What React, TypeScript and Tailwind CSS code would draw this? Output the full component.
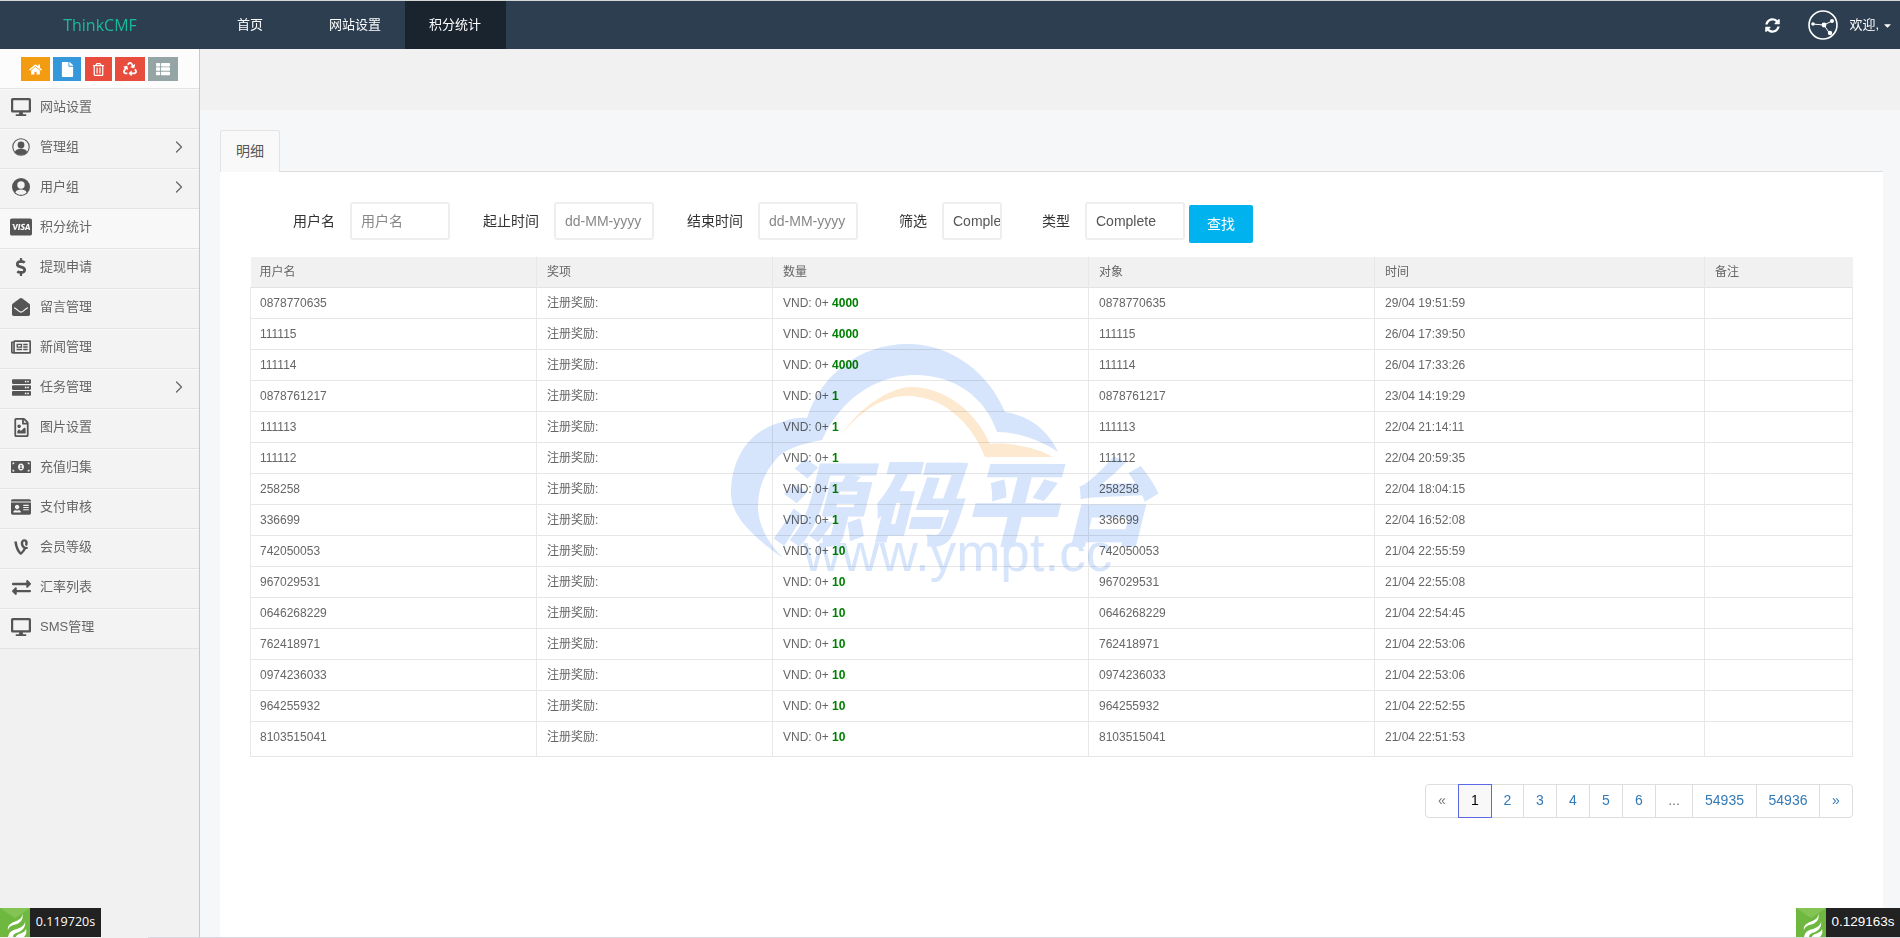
import React from "react";
import {
  FaHome, FaFile, FaRegTrashAlt, FaRecycle, FaThList, FaDesktop, FaCcVisa, FaDollarSign,
  FaEnvelopeOpen, FaRegNewspaper, FaServer, FaRegFileImage, FaMoneyBillAlt, FaIdCard, FaVine, FaExchangeAlt,
  FaSyncAlt, FaCaretDown,
} from "react-icons/fa";
import { ChevronRight } from "lucide-react";

function UserThin({ className }: { className?: string }) {
  return (
    <svg viewBox="0 0 18 18" className={className}>
      <circle cx="9" cy="9" r="8.2" fill="none" stroke="currentColor" strokeWidth="1.1" />
      <circle cx="9" cy="7" r="3.4" fill="currentColor" />
      <path d="M2.8 14.2C3.6 11.6 6 10.8 9 10.8s5.4.8 6.2 3.4C13.6 16 11.4 17 9 17s-4.6-1-6.2-2.8z" fill="currentColor" />
    </svg>
  );
}

function UserThick({ className }: { className?: string }) {
  return (
    <svg viewBox="0 0 18 18" className={className}>
      <circle cx="9" cy="9" r="9" fill="currentColor" />
      <circle cx="9" cy="7" r="3.7" fill="#f3f3f3" />
      <path d="M3.4 14.4C4 12.2 6.4 11.4 9 11.4s5 .8 5.6 3C13.2 16 11.2 16.8 9 16.8s-4.2-.8-5.6-2.4z" fill="#f3f3f3" />
    </svg>
  );
}

const side: [React.ComponentType<{ className?: string }>, string, boolean, string][] = [
  [FaDesktop, "网站设置", false, "text-[20px]"],
  [UserThin, "管理组", true, "w-[18px] h-[18px]"],
  [UserThick, "用户组", true, "w-[18px] h-[18px]"],
  [FaCcVisa, "积分统计", false, "text-[22px]"],
  [FaDollarSign, "提现申请", false, "text-[18px]"],
  [FaEnvelopeOpen, "留言管理", false, "text-[18px]"],
  [FaRegNewspaper, "新闻管理", false, "text-[20px]"],
  [FaServer, "任务管理", true, "text-[19px]"],
  [FaRegFileImage, "图片设置", false, "text-[19px]"],
  [FaMoneyBillAlt, "充值归集", false, "text-[20px]"],
  [FaIdCard, "支付审核", false, "text-[20px]"],
  [FaVine, "会员等级", false, "text-[18px]"],
  [FaExchangeAlt, "汇率列表", false, "text-[19px]"],
  [FaDesktop, "SMS管理", false, "text-[20px]"],
];

const rows: [string, string, string][] = [
  ["0878770635", "4000", "29/04 19:51:59"],
  ["111115", "4000", "26/04 17:39:50"],
  ["111114", "4000", "26/04 17:33:26"],
  ["0878761217", "1", "23/04 14:19:29"],
  ["111113", "1", "22/04 21:14:11"],
  ["111112", "1", "22/04 20:59:35"],
  ["258258", "1", "22/04 18:04:15"],
  ["336699", "1", "22/04 16:52:08"],
  ["742050053", "10", "21/04 22:55:59"],
  ["967029531", "10", "21/04 22:55:08"],
  ["0646268229", "10", "21/04 22:54:45"],
  ["762418971", "10", "21/04 22:53:06"],
  ["0974236033", "10", "21/04 22:53:06"],
  ["964255932", "10", "21/04 22:52:55"],
  ["8103515041", "10", "21/04 22:51:53"],
];

const pages: [string, string, string][] = [
  ["«", "w-[32px]", "text-[#777]"],
  ["1", "w-[34px]", "text-black"],
  ["2", "w-[31px]", "text-[#337ab7]"],
  ["3", "w-[33px]", "text-[#337ab7]"],
  ["4", "w-[33px]", "text-[#337ab7]"],
  ["5", "w-[33px]", "text-[#337ab7]"],
  ["6", "w-[33px]", "text-[#337ab7]"],
  ["...", "w-[37px]", "text-[#777]"],
  ["54935", "w-[64px]", "text-[#337ab7]"],
  ["54936", "w-[63px]", "text-[#337ab7]"],
  ["»", "w-[33px]", "text-[#337ab7]"],
];

const F = "font-['Liberation_Sans','Noto_Sans_CJK_SC',sans-serif]";
const inputCls =
  "h-[38px] border-2 border-[#eeeeee] rounded-[3px] bg-white pl-[9px] text-[14px] text-[#555] placeholder:text-[#888] outline-none";

function Flame() {
  return (
    <svg viewBox="0 0 30 29" className="w-[30px] h-[29px] block">
      <rect width="30" height="29" fill="#6fb83f" />
      <path d="M0 0h30L15 10z" fill="#83c455" />
      <path d="M22 5c1 5-3 7-8 9-5 2-7 5-6 8 1-4 5-5 9-6 4-2 7-5 5-11z" fill="#fff" />
      <path d="M25 13c0 4-3 6-8 8-5 1-8 3-9 8h5c0-3 3-4 6-5 4-2 7-5 6-11z" fill="#fff" />
      <path d="M26 21c-1 3-4 4-7 5-2 1-3 2-3 3h8c2-2 3-5 2-8z" fill="#fff" />
    </svg>
  );
}

function Watermark() {
  return (
    <div className="absolute left-[731px] top-[344px] w-[430px] h-[245px] pointer-events-none mix-blend-multiply">
      <svg viewBox="0 0 430 245" className="absolute left-0 top-0 w-[430px] h-[245px]">
        <path
          d="M52 214C18 190 0 170 0 150C0 110 22 85 51 78C60 74 70 73 76 74C90 30 130 0 176 0C222 0 258 30 274 68C300 72 318 88 327 108C306 94 284 88 266 88C254 52 222 31 184 31C150 31 112 50 91 96C70 100 55 105 47 113C33 128 27 145 27 163C27 180 36 198 52 214Z"
          fill="#d6e5fb"
        />
        <path
          d="M109 93C130 60 162 43 180 43C216 43 246 70 259 100C280 98 306 104 322 113L254 113C240 78 212 52 176 52C150 52 126 70 109 93Z"
          fill="#fde9cf"
        />
      </svg>
      <div className="absolute left-[40px] top-[98px] w-[400px] text-[93px] leading-[112px] font-black italic text-[#d6e5fb] tracking-[3px] whitespace-nowrap font-['Noto_Sans_CJK_SC',sans-serif]">
        源码平台
      </div>
      <div className="absolute left-[72px] top-[179px] text-[53px] leading-[60px] text-[#d6e5fb] whitespace-nowrap font-['Liberation_Sans',sans-serif]">
        www.ympt.cc
      </div>
    </div>
  );
}

export default function App() {
  return (
    <div className={`relative w-[1900px] h-[938px] overflow-hidden bg-[#f6f7f9] flex flex-col ${F}`}>
      <header className="h-[49px] shrink-0 flex bg-[#2c3e50] border-t border-[#d5d5d5] text-white">
        <div className="w-[200px] flex items-center justify-center text-[16px] text-[#18bc9c] font-['Open_Sans',sans-serif]">
          ThinkCMF
        </div>
        <nav className="flex text-[13px] ml-[13px]">
          <a className="px-[24px] flex items-center">首页</a>
          <a className="ml-[18px] px-[24px] flex items-center">网站设置</a>
          <a className="px-[24px] w-[101px] flex items-center bg-[#1a242f]">积分统计</a>
        </nav>
        <div className="ml-auto flex items-center pr-[7px]">
          <FaSyncAlt className="text-[15px] mr-[28px]" />
          <svg viewBox="0 0 30 30" className="w-[30px] h-[30px] mr-[11px]" fill="none" stroke="#fff">
            <circle cx="15" cy="15" r="14" strokeWidth="1.6" />
            <path d="M4 14l12 1 8-4M16 15l6 9" strokeWidth="1" />
            <circle cx="16" cy="15" r="2.4" fill="#fff" stroke="none" />
            <circle cx="5" cy="14" r="1.8" fill="#fff" stroke="none" />
            <circle cx="24" cy="11" r="2" fill="#fff" stroke="none" />
            <circle cx="22" cy="23" r="2.2" fill="#fff" stroke="none" />
          </svg>
          <span className="text-[13px]">欢迎,</span>
          <FaCaretDown className="text-[11px] ml-[3px]" />
        </div>
      </header>

      <div className="flex flex-1 min-h-0">
        <aside className="w-[200px] shrink-0 bg-[#f1f1f1] border-r border-[#c8c8c8] flex flex-col">
          <div className="h-[40px] bg-[#fcfcfc] border-b border-[#e3e3e3] flex items-start pt-[8px] pl-[21px] text-white">
            <span className="w-[29px] h-[24px] mr-[3px] bg-[#f39c12] flex items-center justify-center"><FaHome className="text-[13px]" /></span>
            <span className="w-[28px] h-[24px] mr-[4px] bg-[#3498db] flex items-center justify-center"><FaFile className="text-[15px]" /></span>
            <span className="w-[27px] h-[24px] mr-[3px] bg-[#e74c3c] flex items-center justify-center"><FaRegTrashAlt className="text-[13px]" /></span>
            <span className="w-[30px] h-[24px] mr-[3px] bg-[#e74c3c] flex items-center justify-center"><FaRecycle className="text-[14px]" /></span>
            <span className="w-[30px] h-[24px] bg-[#95a5a6] flex items-center justify-center"><FaThList className="text-[14px]" /></span>
          </div>
          {side.map(([Icon, label, more, size], i) => (
            <div
              key={label}
              className={`h-[40px] border-t border-b border-t-[#f9f9f9] border-b-[#e3e3e3] flex items-center pb-[4px] text-[13px] text-[#666] ${i === 3 ? "bg-[#f8f8f8]" : "bg-[#f3f3f3]"}`}
            >
              <span className="w-[40px] flex justify-center pl-[2px] text-[#555]">
                <Icon className={size} />
              </span>
              <span>{label}</span>
              {more && <ChevronRight size={20} strokeWidth={1.5} className="ml-auto mr-[10px] text-[#666]" />}
            </div>
          ))}
        </aside>

        <main className="flex-1 min-w-0 flex flex-col">
          <div className="h-[61px] shrink-0 bg-[#f1f1f1]" />
          <div className="flex-1 pl-[20px] pr-[17px] pt-[20px] flex flex-col min-h-0">
            <div className="h-[41px] shrink-0 flex">
              <div className="w-[60px] h-[42px] relative z-10 bg-[#f9f9f9] border border-b-0 border-[#e3e3e3] rounded-t-[3px] flex items-center justify-center text-[14px] text-[#555]">
                明细
              </div>
            </div>
            <section className="flex-1 bg-white border-t border-[#dddddd] pl-[30px] pr-[31px] min-h-0">
              <div className="flex items-start pt-[30px] h-[85px] text-[14px] text-[#333]">
                <label className="ml-[43px] mr-[15px] leading-[38px]">用户名</label>
                <input className={`${inputCls} w-[100px]`} placeholder="用户名" />
                <label className="ml-[33px] mr-[15px] leading-[38px]">起止时间</label>
                <input className={`${inputCls} w-[100px]`} placeholder="dd-MM-yyyy" />
                <label className="ml-[33px] mr-[15px] leading-[38px]">结束时间</label>
                <input className={`${inputCls} w-[100px]`} placeholder="dd-MM-yyyy" />
                <label className="ml-[41px] mr-[15px] leading-[38px]">筛选</label>
                <input className={`${inputCls} w-[60px] text-[#333]`} defaultValue="Complete" />
                <label className="ml-[40px] mr-[15px] leading-[38px]">类型</label>
                <input className={`${inputCls} w-[100px] text-[#333]`} defaultValue="Complete" />
                <button className="ml-[4px] mt-[3px] w-[64px] h-[38px] rounded-[2px] bg-[#00b2ee] text-white text-[14px]">查找</button>
              </div>
              <table className="table-fixed border-collapse w-[1602px] text-[12px] text-[#666]">
                <colgroup>
                  <col className="w-[286px]" />
                  <col className="w-[236px]" />
                  <col className="w-[316px]" />
                  <col className="w-[286px]" />
                  <col className="w-[330px]" />
                  <col className="w-[148px]" />
                </colgroup>
                <thead>
                  <tr className="h-[30px] bg-[#f1f1f1] border-b border-[#e3e3e3]">
                    {["用户名", "奖项", "数量", "对象", "时间", "备注"].map((h, i) => (
                      <th key={h} className={`font-normal text-left border-l border-[#e7e7e7] first:border-l-0 ${i === 0 ? "pl-[9px]" : "pl-[10px]"}`}>{h}</th>
                    ))}
                  </tr>
                </thead>
                <tbody>
                  {rows.map(([u, n, t], i) => {
                    const last = i === rows.length - 1;
                    const td = `pl-[10px] border-l border-[#e8e8e8] ${last ? "pb-[4px]" : ""}`;
                    return (
                      <tr key={u + t} className={`${last ? "h-[35px]" : "h-[31px]"} border-b border-[#e6e6e6]`}>
                        <td className={`${td} !pl-[9px]`}>{u}</td>
                        <td className={td}>注册奖励:</td>
                        <td className={td}>
                          VND: 0+ <b className="text-[#008000]">{n}</b>
                        </td>
                        <td className={td}>{u}</td>
                        <td className={td}>{t}</td>
                        <td className={`${td} border-r`} />
                      </tr>
                    );
                  })}
                </tbody>
              </table>
              <div className="flex justify-end mt-[27px] -mr-px">
                <div className="flex h-[34px] border border-[#dddddd] rounded-[4px] text-[14px] bg-white">
                  {pages.map(([p, w, c]) => (
                    <span
                      key={p}
                      className={`${w} ${c} flex items-center justify-center ${
                        p === "1"
                          ? "bg-[#f8f8f8] border border-[#5b68e8] -my-px"
                          : p === "«" || p === "2"
                            ? ""
                            : "border-l border-[#dddddd]"
                      }`}
                    >
                      {p}
                    </span>
                  ))}
                </div>
              </div>
            </section>
          </div>
        </main>
      </div>

      <Watermark />

      <div className="absolute left-0 bottom-[1px] flex items-end text-white font-['Open_Sans',sans-serif]">
        <Flame />
        <span className="w-[71px] h-[29px] bg-[#222222] flex items-center justify-center text-[12.5px]">0.119720s</span>
      </div>
      <div className="absolute right-0 bottom-[1px] flex items-end text-white text-[13.5px]">
        <Flame />
        <span className="w-[74px] h-[29px] bg-[#222222] flex items-center justify-center">0.129163s</span>
      </div>
      <div className="absolute left-[148px] right-0 bottom-0 h-px bg-[#d8d8de]" />
    </div>
  );
}
